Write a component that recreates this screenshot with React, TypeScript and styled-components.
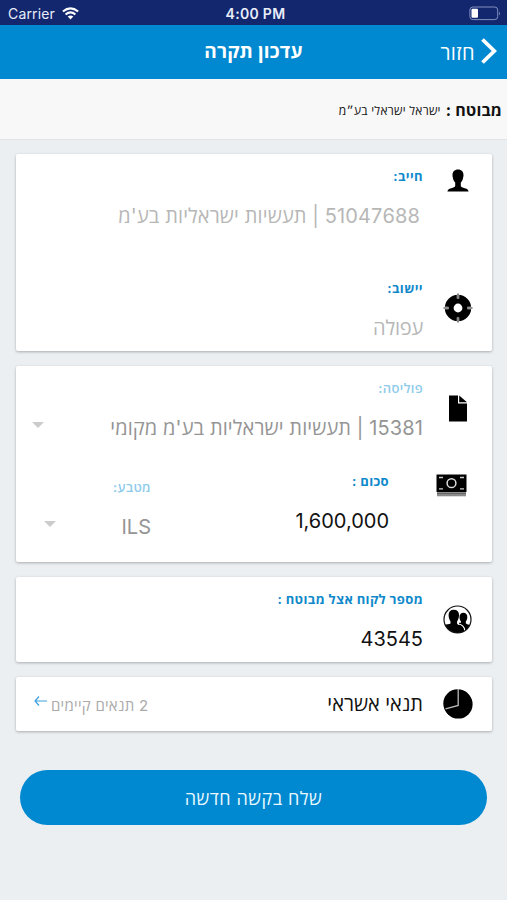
import React from "react";
import styled, { createGlobalStyle } from "styled-components";

const Global = createGlobalStyle`
  * { box-sizing: border-box; }
  body { margin: 0; background: #ebeff2; font-family: Inter, "Open Sans", "Liberation Sans", sans-serif; }
`;

const Screen = styled.div`
  direction: rtl;
  width: 507px;
  height: 900px;
  background: #ebeff2;
  overflow: hidden;
`;

const StatusBar = styled.div`
  direction: ltr;
  display: grid;
  grid-template-columns: 1fr auto 1fr;
  align-items: center;
  height: 25px;
  padding: 2px 6px 0 8px;
  background: #13276f;
  color: #e9edfa;
  font-size: 14px;
`;

const Carrier = styled.div`
  display: flex;
  align-items: center;
  gap: 7px;
  letter-spacing: 0.15px;
`;

const Clock = styled.div`
  font-weight: 600;
  letter-spacing: 0.3px;
  padding-left: 2px;
`;

const BatterySlot = styled.div`
  display: flex;
  justify-content: flex-end;
`;

const NavBar = styled.header`
  display: grid;
  grid-template-columns: 1fr auto 1fr;
  align-items: center;
  height: 54px;
  padding: 0 10px;
  background: #0089d0;
  color: #fff;
`;

const Back = styled.div`
  display: flex;
  align-items: center;
  gap: 6px;
  padding-bottom: 2px;
  font-size: 20px;
  line-height: 28px;
  letter-spacing: 0.4px;

  span {
    padding-top: 3px;
  }
`;

const Title = styled.h1`
  margin: 0;
  font-size: 19px;
  line-height: 28px;
  font-weight: 700;
  letter-spacing: 0.25px;
`;

const InsuredBar = styled.div`
  display: flex;
  align-items: center;
  gap: 5px;
  height: 61px;
  padding: 2px 5px 0 0;
  background: #f8f8f8;
  border-bottom: 1px solid #e2e4e6;
  color: #111;
`;

const InsuredLabel = styled.span`
  font-size: 16px;
  font-weight: 700;
  letter-spacing: 0.15px;
`;

const InsuredName = styled.span`
  padding-top: 1px;
  font-size: 12px;
  font-weight: 500;
  letter-spacing: 0.25px;
`;

const Cards = styled.main`
  display: flex;
  flex-direction: column;
  gap: 15px;
  padding: 14px 15px 0 16px;
`;

const Card = styled.section<{ $height: number }>`
  height: ${(p) => p.$height}px;
  background: #fff;
  border-radius: 2px;
  box-shadow: 0 1px 3px rgba(0, 0, 0, 0.28);
`;

const Row = styled.div<{ $height: number }>`
  display: flex;
  height: ${(p) => p.$height}px;
`;

const IconCell = styled.div<{ $center: number; $width?: number }>`
  display: flex;
  flex: none;
  justify-content: center;
  align-items: center;
  width: ${(p) => p.$width ?? 69}px;
  height: ${(p) => p.$center * 2}px;
`;

const Field = styled.div<{ $width?: number; $top?: number; $inset?: number }>`
  flex: ${(p) => (p.$width ? "none" : 1)};
  width: ${(p) => (p.$width ? `${p.$width}px` : "auto")};
  padding-top: ${(p) => p.$top ?? 12}px;
  padding-right: ${(p) => p.$inset ?? 0}px;
`;

const Label = styled.div<{ $faded?: boolean }>`
  height: 20px;
  line-height: 20px;
  font-size: 13px;
  font-weight: ${(p) => (p.$faded ? 600 : 700)};
  letter-spacing: 0.38px;
  color: ${(p) => (p.$faded ? "#8ecbeb" : "#1089cb")};
  white-space: nowrap;
`;

const Value = styled.div<{ $tone?: "light" | "mid"; $indent?: number; $spacing?: number }>`
  display: flex;
  justify-content: space-between;
  align-items: center;
  height: 30px;
  margin-top: 15px;
  padding-right: ${(p) => p.$indent ?? 0}px;
  font-size: 20px;
  line-height: 30px;
  letter-spacing: ${(p) => p.$spacing ?? 0}px;
  white-space: nowrap;
  color: ${(p) => (p.$tone === "light" ? "#b7b7b7" : p.$tone === "mid" ? "#959595" : "#111")};
`;

const Caret = styled.svg<{ $left: number }>`
  width: 12px;
  height: 6px;
  margin: -6px 0 0 ${(p) => p.$left}px;
`;

const TermsRow = styled.div`
  display: flex;
  align-items: center;
  height: 54px;
  padding-left: 18px;
`;

const TermsTitle = styled.div`
  flex: 1;
  padding-bottom: 2px;
  font-size: 20px;
  font-weight: 500;
  color: #111;
`;

const TermsLink = styled.div`
  display: flex;
  align-items: center;
  gap: 4px;
  padding-top: 1px;
  font-size: 15px;
  letter-spacing: 0.25px;
  color: #aaa;
`;

const Arrow = styled.svg`
  width: 13px;
  height: 12px;
  margin-top: -7px;
`;

const Submit = styled.button`
  display: block;
  width: 467px;
  height: 55px;
  margin: 39px 20px 0;
  padding: 0;
  border: 0;
  border-radius: 28px;
  background: #0089d0;
  color: #e9f8ff;
  font: inherit;
  font-size: 18px;
  letter-spacing: 0.45px;
`;

const WifiIcon = () => (
  <svg width="17" height="13" viewBox="0 0 17 13" fill="none" stroke="#fff" strokeWidth="2.2">
    <path d="M.9 4.5Q8.5-1.8 16.1 4.5M3.6 7.5Q8.5 3.4 13.4 7.5" />
    <path d="M5.7 9.6Q8.5 7.4 11.3 9.6L8.5 12.5Z" fill="#fff" stroke="none" />
  </svg>
);

const BatteryIcon = () => (
  <svg width="32" height="15" viewBox="0 0 32 15">
    <rect x=".9" y="1" width="27.8" height="12.6" rx="3" fill="none" stroke="#8390bd" />
    <rect x="2.5" y="2.8" width="6.5" height="9" rx="1" fill="#fff" />
    <path d="M30 5.5q1.8 1.8 0 4z" fill="#8390bd" />
  </svg>
);

const ChevronIcon = () => (
  <svg width="16" height="26" viewBox="0 0 16 26" fill="none" stroke="#fff" strokeWidth="3.8">
    <path d="M1.5 1.5 13.3 13 1.5 24.5" />
  </svg>
);

const PersonIcon = () => (
  <svg width="22" height="23" viewBox="0 0 22 23">
    <path d="M11 .5C14.6.5 16.6 2.800 16.500 6.300c0 1.300-.3 2-.5 3-.4 2.100-1.200 3.300-2.200 4.300v3.100c.2 1.400 1.800 1.900 4 2.500 2.600.6 3.600 1.500 3.800 3.400H.4c.2-1.900 1.200-2.800 3.800-3.400 2.200-.6 3.800-1.100 4-2.500v-3.100c-1-1-1.800-2.200-2.200-4.300-.2-1-.5-1.700-.5-3C5.400 2.800 7.400.5 11 .5Z" />
  </svg>
);

const TargetIcon = () => (
  <svg width="30" height="30" viewBox="0 0 30 30">
    <circle cx="15" cy="15" r="8.800" fill="none" stroke="#000" strokeWidth="8.800" />
    <path d="M15 0v5.500M15 24.500V30M0 15h5.500M24.500 15H30" stroke="#fff" strokeWidth="2.400" />
    <path d="M15 .5V5M15 25v4.500M.5 15H5M25 15h4.500" stroke="#222" strokeWidth="1.100" />
  </svg>
);

const FileIcon = () => (
  <svg width="18" height="27" viewBox="0 0 18 27">
    <path d="M0 .5h9v8h9v18H0Z" />
    <path d="M10.200.5 18 7.300h-7.800Z" />
  </svg>
);

const CashIcon = () => (
  <svg width="31" height="23" viewBox="0 0 31 23">
    <path d="M.5.5h30v17.500H.5Z" />
    <path d="M1 20.300h29" stroke="#8a8a8a" strokeWidth="4" />
    <path d="M1 19.200h29" stroke="#555" strokeWidth="1" />
    <circle cx="15.500" cy="9.200" r="4.400" fill="none" stroke="#ddd" strokeWidth="1.500" />
    <path d="M3 3.500h4M24 3.500h4M3 14.800h4M24 14.800h4" stroke="#ccc" strokeWidth="1.300" />
  </svg>
);

const PeopleIcon = () => (
  <svg width="29" height="29" viewBox="0 0 29 29">
    <defs>
      <clipPath id="disc">
        <circle cx="14.500" cy="14.500" r="13.400" />
      </clipPath>
    </defs>
    <g clipPath="url(#disc)">
      <path d="M20.300 7.800c2.700 0 4.100 1.800 4 4.500-.1 2-.7 3.300-1.500 4.300v1.600c1 1.300 3.600 1 6 3V29H16V17.800h2v-1.200c-.9-1-1.400-2.300-1.500-4.300-.1-2.700 1.300-4.500 3.800-4.500Z" />
      <path d="M10.800 4.800c3.600 0 5.300 2.100 5.200 5.400-.1 2.900-.9 4.700-1.900 6v2.600c1.700 2 6.700 1.300 7.800 5V29H-1v-8c1.500-2.200 7.300-1 8.500-2.400v-2.400c-1-1.300-1.800-3.100-1.900-6-.1-3.300 1.600-5.400 5.200-5.400Z" />
      <path d="M15 19c4 .4 6.500 2.400 6.900 7" fill="none" stroke="#fff" strokeWidth="1.200" />
    </g>
    <circle cx="14.500" cy="14.500" r="13.500" fill="none" stroke="#111" strokeWidth="1.200" />
  </svg>
);

const PieIcon = () => (
  <svg width="30" height="30" viewBox="0 0 30 30">
    <circle cx="15.300" cy="15.300" r="14.300" />
    <circle cx="14.600" cy="14.600" r="14.300" />
    <path d="M15.200 0v16.500L2.500 19.800" fill="none" stroke="#bbb" strokeWidth="1.300" />
  </svg>
);

const Dropdown = ({ left }: { left: number }) => (
  <Caret $left={left} viewBox="0 0 12 6">
    <path d="M0 0h12L6 6Z" fill="#ccc" />
  </Caret>
);

export default function App() {
  return (
    <Screen>
      <Global />
      <StatusBar>
        <Carrier>Carrier<WifiIcon /></Carrier>
        <Clock>4:00 PM</Clock>
        <BatterySlot><BatteryIcon /></BatterySlot>
      </StatusBar>
      <NavBar>
        <Back><ChevronIcon /><span>חזור</span></Back>
        <Title>עדכון תקרה</Title>
        <span />
      </NavBar>
      <InsuredBar>
        <InsuredLabel>מבוטח :</InsuredLabel>
        <InsuredName>ישראל ישראלי בע״מ</InsuredName>
      </InsuredBar>
      <Cards>
        <Card $height={197}>
          <Row $height={112}>
            <IconCell $center={26}><PersonIcon /></IconCell>
            <Field>
              <Label>חייב:</Label>
              <Value $tone="light" $indent={3} $spacing={0.11}>51047688 | תעשיות ישראליות בע'מ</Value>
            </Field>
          </Row>
          <Row $height={85}>
            <IconCell $center={42}><TargetIcon /></IconCell>
            <Field>
              <Label>יישוב:</Label>
              <Value $tone="light" $spacing={-0.2}>עפולה</Value>
            </Field>
          </Row>
        </Card>
        <Card $height={196}>
          <Row $height={93}>
            <IconCell $center={42}><FileIcon /></IconCell>
            <Field>
              <Label $faded>פוליסה:</Label>
              <Value $tone="mid" $spacing={0.1}>
                <span>15381 | תעשיות ישראליות בע'מ מקומי</span>
                <Dropdown left={16} />
              </Value>
            </Field>
          </Row>
          <Row $height={103}>
            <IconCell $center={26} $width={81}><CashIcon /></IconCell>
            <Field $width={260} $inset={22}>
              <Label>סכום :</Label>
              <Value>1,600,000</Value>
            </Field>
            <Field $top={18}>
              <Label $faded>מטבע:</Label>
              <Value $tone="mid">
                <span>ILS</span>
                <Dropdown left={28} />
              </Value>
            </Field>
          </Row>
        </Card>
        <Card $height={85}>
          <Row $height={85}>
            <IconCell $center={42}><PeopleIcon /></IconCell>
            <Field>
              <Label>מספר לקוח אצל מבוטח :</Label>
              <Value>43545</Value>
            </Field>
          </Row>
        </Card>
        <Card $height={54}>
          <TermsRow>
            <IconCell $center={27}><PieIcon /></IconCell>
            <TermsTitle>תנאי אשראי</TermsTitle>
            <TermsLink>
              <span>2 תנאים קיימים</span>
              <Arrow viewBox="0 0 13 12" fill="none" stroke="#3d9fe0" strokeWidth="1.200">
                <path d="M13 6H1M5 1.500 1 6l4 4.500" />
              </Arrow>
            </TermsLink>
          </TermsRow>
        </Card>
      </Cards>
      <Submit>שלח בקשה חדשה</Submit>
    </Screen>
  );
}
